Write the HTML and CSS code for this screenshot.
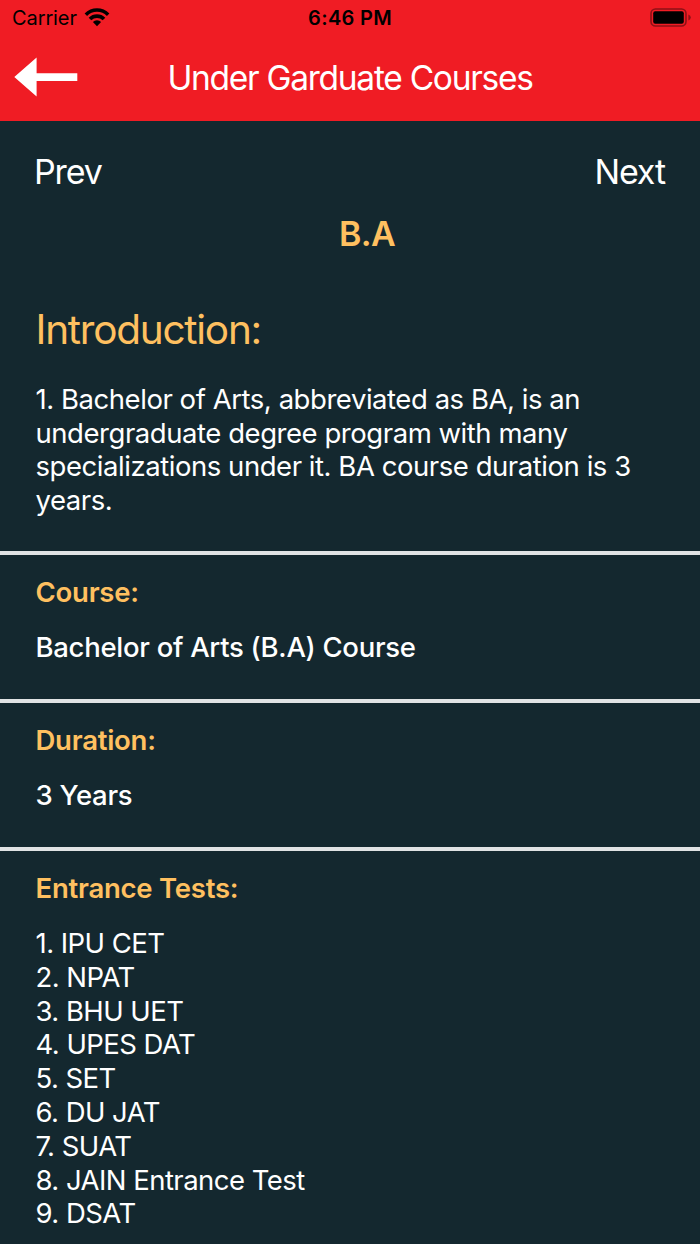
FILE: index.html
```html
<!DOCTYPE html>
<html lang="en">
<head>
    <meta charset="UTF-8">
    <meta name="viewport" content="width=device-width, initial-scale=1.0">
    <title>Under Garduate Courses</title>
    <link rel="stylesheet" href="styles.css">
</head>
<body>
    <!-- Status bar -->
    <div class="status-bar">
        <div class="carrier">
            <span>Carrier</span>
            <svg class="wifi" width="26" height="20" viewBox="0 0 26 20">
                <path d="M0.6 6.4 A17.4 17.4 0 0 1 25.4 6.4 L22.9 9 A13.9 13.9 0 0 0 3.1 9 Z"/>
                <path d="M4.7 10.7 A11.7 11.7 0 0 1 21.3 10.7 L18.7 13.3 A8 8 0 0 0 7.3 13.3 Z"/>
                <path d="M8.9 15 A5.8 5.8 0 0 1 17.1 15 L13 19.2 Z"/>
            </svg>
        </div>
        <div class="time">6:46 PM</div>
        <svg class="battery" width="42" height="20" viewBox="0 0 42 20">
            <rect class="battery-case" x="1" y="1" width="35" height="17" rx="4.5"/>
            <rect x="3.2" y="3.2" width="30.6" height="12.6" rx="2"/>
            <path class="battery-tip" d="M38.4 6.6 Q40.8 7.6 40.8 9.5 T38.4 12.4 Z"/>
        </svg>
    </div>

    <!-- Header -->
    <header class="header">
        <a class="back" href="#">
            <svg width="64" height="40" viewBox="0 0 64 40">
                <path d="M0.3 20 L22.6 0.4 V16.2 H63.3 V24 H22.6 V39.6 Z"/>
            </svg>
        </a>
        <h1>Under Garduate Courses</h1>
    </header>

    <!-- Prev / Next -->
    <nav class="pager">
        <a class="prev" href="#">Prev</a>
        <a class="next" href="#">Next</a>
    </nav>
    <h2 class="course-name">B.A</h2>

    <section class="intro">
        <h3>Introduction:</h3>
        <p>1. Bachelor of Arts, abbreviated as BA, is an<br>undergraduate degree program with many<br>specializations under it. BA course duration is 3<br>years.</p>
    </section>

    <section class="block">
        <h4>Course:</h4>
        <p>Bachelor of Arts (B.A) Course</p>
    </section>

    <section class="block">
        <h4>Duration:</h4>
        <p>3 Years</p>
    </section>

    <section class="block tests">
        <h4>Entrance Tests:</h4>
        <ul>
            <li>1. IPU CET</li>
            <li>2. NPAT</li>
            <li>3. BHU UET</li>
            <li>4. UPES DAT</li>
            <li>5. SET</li>
            <li>6. DU JAT</li>
            <li>7. SUAT</li>
            <li>8. JAIN Entrance Test</li>
            <li>9. DSAT</li>
        </ul>
    </section>
</body>
</html>
```
FILE: styles.css
```css
* {
    box-sizing: border-box;
    margin: 0;
    padding: 0;
}
body {
    height: 1244px;
    overflow: hidden;
    background-color: #14282f;
    color: #fff;
    font-family: Inter, 'Liberation Sans', sans-serif;
}
a {
    color: #fff;
    text-decoration: none;
}
.status-bar {
    height: 34px;
    padding: 2px 8px 0 12px;
    display: grid;
    grid-template-columns: 1fr auto 1fr;
    align-items: center;
    background-color: #f01c24;
    color: #000;
    font-size: 20px;
    line-height: 32px;
}
.carrier {
    display: flex;
    align-items: center;
    gap: 7px;
    letter-spacing: -0.1px;
}
.wifi {
    margin-top: -3px;
}
.time {
    margin-right: 4px;
    font-weight: 600;
    letter-spacing: 0.3px;
}
.battery {
    justify-self: end;
}
.battery-case {
    fill: none;
    stroke: #8d1116;
    stroke-width: 1.6;
}
.battery-tip {
    fill: #8d1116;
}
.header {
    height: 87px;
    padding: 0 14px;
    display: grid;
    grid-template-columns: 64px 1fr 64px;
    align-items: center;
    background-color: #f01c24;
}
.back svg {
    display: block;
    margin-bottom: 2px;
    fill: #fff;
}
h1 {
    font-size: 33.5px;
    font-weight: 400;
    text-align: center;
    white-space: nowrap;
    letter-spacing: -1.28px;
}
.pager {
    display: flex;
    justify-content: space-between;
    padding: 31px 35px 0 34px;
    font-size: 34px;
    line-height: 40px;
    letter-spacing: -1.1px;
}
.course-name {
    margin-top: 22px;
    padding-left: 34px;
    text-align: center;
    color: #ffc060;
    font-size: 34px;
    font-weight: 600;
    line-height: 40px;
    letter-spacing: -0.7px;
}
.intro {
    padding: 52px 30px 34px 35.5px;
    border-bottom: 4px solid #e0e3e4;
}
.intro h3 {
    color: #ffc060;
    font-size: 40.5px;
    font-weight: 400;
    line-height: 48px;
    letter-spacing: -1.25px;
}
.intro p {
    margin-top: 29px;
    font-size: 27.5px;
    line-height: 33.5px;
    letter-spacing: -0.45px;
}
.block {
    padding: 20px 35.5px 35px;
    border-bottom: 4px solid #e0e3e4;
    font-size: 27.5px;
    font-weight: 500;
    line-height: 34px;
    letter-spacing: -0.29px;
}
.block h4 {
    margin-bottom: 21px;
    color: #ffc060;
    font-weight: 600;
    letter-spacing: -0.24px;
}
.tests {
    border-bottom: none;
}
.tests ul {
    padding-top: 1px;
    list-style: none;
    font-weight: 400;
    line-height: 33.8px;
    letter-spacing: -0.54px;
}
```
